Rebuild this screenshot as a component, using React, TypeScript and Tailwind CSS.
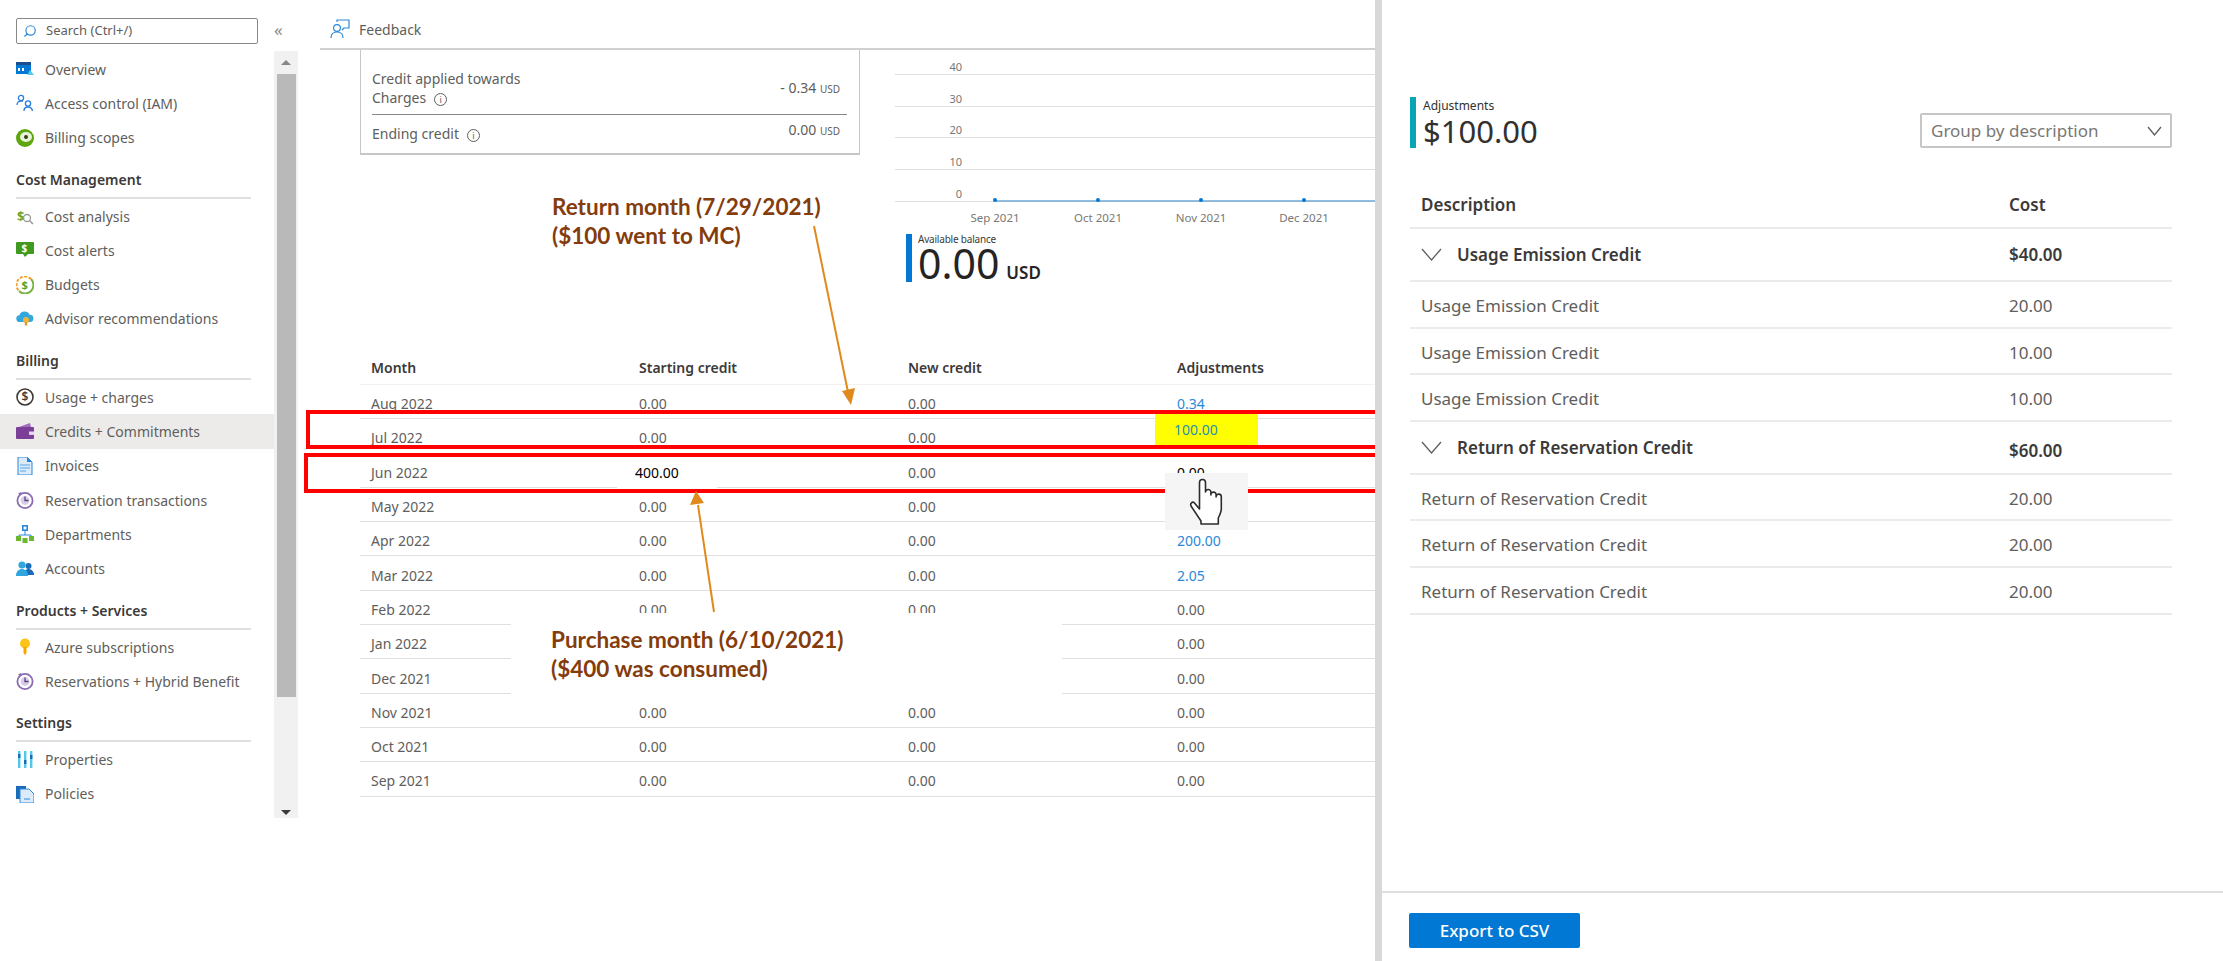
import React from "react";
import { Search } from "lucide-react";

// sidebar icons, all on an 18x18 box
const OverviewIcon = () => (
  <svg width="18" height="18" viewBox="0 0 18 18">
    <rect x="0" y="2" width="15" height="12" fill="#0078d4" />
    <rect x="0" y="2" width="15" height="3" fill="#1b4f8c" />
    <rect x="2" y="8" width="2" height="3" fill="#fff" />
    <rect x="6" y="8" width="2" height="3" fill="#fff" />
    <path d="M11 15 L14 10 L18 15 Z" fill="#50c8e8" />
  </svg>
);
const IamIcon = () => (
  <svg width="18" height="18" viewBox="0 0 18 18" fill="none" stroke="#2a7de1" strokeWidth="1.3">
    <circle cx="5" cy="4" r="2.6" />
    <path d="M1 11 c0-3 2-4 4-4 h2" />
    <circle cx="12" cy="9.5" r="2.6" />
    <path d="M8 17 c0-3 2-4 4-4 s4 1 4.5 4" />
  </svg>
);
const ScopesIcon = () => (
  <svg width="18" height="18" viewBox="0 0 18 18">
    <circle cx="9" cy="9" r="9" fill="#5ea60f" />
    <ellipse cx="10" cy="8" rx="6" ry="5" fill="#e8f3d8" />
    <circle cx="10" cy="8" r="2" fill="#30421a" />
  </svg>
);
const CostAnalysisIcon = () => (
  <svg width="18" height="18" viewBox="0 0 18 18" fill="none">
    <text x="1" y="14" fontSize="13" fontWeight="700" fill="#6aa52b" fontFamily="Noto Sans, sans-serif">$</text>
    <circle cx="11" cy="11" r="3.5" stroke="#9a9a9a" strokeWidth="1.3" />
    <path d="M13.5 13.5 L17 17" stroke="#9a9a9a" strokeWidth="1.5" />
  </svg>
);
const CostAlertsIcon = () => (
  <svg width="18" height="18" viewBox="0 0 18 18">
    <path d="M1 1 H17 a1 1 0 0 1 1 1 V12 a1 1 0 0 1 -1 1 H12 L9 16 L7 13 H1 a1 1 0 0 1 -1 -1 V2 a1 1 0 0 1 1 -1 Z" fill="#3f9a1d" />
    <text x="5.5" y="11" fontSize="10" fontWeight="700" fill="#fff" fontFamily="Noto Sans, sans-serif">$</text>
  </svg>
);
const BudgetsIcon = () => (
  <svg width="18" height="18" viewBox="0 0 18 18" fill="none">
    <path d="M3 15 a8 8 0 0 0 12 -12" stroke="#7bb342" strokeWidth="2" />
    <path d="M15 3 a8 8 0 0 0 -12 12" stroke="#f0a030" strokeWidth="2" strokeDasharray="3 1.5" />
    <text x="5.6" y="13" fontSize="11" fontWeight="700" fill="#57a31c" fontFamily="Noto Sans, sans-serif">$</text>
  </svg>
);
const AdvisorIcon = () => (
  <svg width="18" height="18" viewBox="0 0 18 18">
    <path d="M4 12 a3.4 3.4 0 0 1 -.6 -6.8 A5.5 5.5 0 0 1 13.6 4.8 A3.6 3.6 0 0 1 14 12 Z" fill="#32a8dc" />
    <circle cx="10" cy="10" r="3" fill="#f3b13d" />
    <rect x="8.8" y="12" width="2.4" height="3.5" fill="#d99a2b" />
  </svg>
);
const UsageIcon = () => (
  <svg width="18" height="18" viewBox="0 0 18 18" fill="none">
    <circle cx="9" cy="9" r="8" stroke="#3b3a39" strokeWidth="1.6" />
    <text x="5.4" y="13.4" fontSize="12" fontWeight="600" fill="#3b3a39" fontFamily="Noto Sans, sans-serif">$</text>
  </svg>
);
const WalletIcon = () => (
  <svg width="18" height="18" viewBox="0 0 18 18">
    <path d="M3 4 L14 0 L15 4 Z" fill="#a36cc0" />
    <rect x="0" y="4" width="18" height="12" rx="1" fill="#7b3f98" />
    <rect x="13" y="8.5" width="5" height="3.4" fill="#e6d6ee" />
  </svg>
);
const InvoiceIcon = () => (
  <svg width="18" height="18" viewBox="0 0 18 18">
    <path d="M2 0 H11 L16 5 V18 H2 Z" fill="#dcebfa" stroke="#2b88d8" strokeWidth="1" />
    <path d="M11 0 L16 5 H11 Z" fill="#2b88d8" />
    <path d="M4 8 H14 M4 11 H14 M4 14 H10" stroke="#5aa5e6" strokeWidth="1.2" />
  </svg>
);
const ReservationIcon = () => (
  <svg width="18" height="18" viewBox="0 0 18 18" fill="none">
    <circle cx="9" cy="9.5" r="7.6" stroke="#8a6bb1" strokeWidth="1.8" />
    <circle cx="9" cy="9.5" r="4.4" fill="#d8cde6" />
    <path d="M9 5.5 V9.5 H12.5" stroke="#5c3f80" strokeWidth="1.3" />
    <path d="M2 2.5 L5 1 L5 4.5 Z" fill="#8a6bb1" />
  </svg>
);
const DepartmentsIcon = () => (
  <svg width="18" height="18" viewBox="0 0 18 18">
    <rect x="6" y="0" width="6" height="6" fill="#2b88d8" />
    <rect x="7.6" y="1.6" width="2.8" height="2.8" fill="#fff" />
    <path d="M9 6 V10 M3 12 V10 H15 V12" stroke="#2b88d8" strokeWidth="1" fill="none" />
    <rect x="0" y="11" width="5" height="5" fill="#6bb72d" />
    <rect x="6.5" y="13" width="5" height="5" fill="#6bb72d" />
    <rect x="13" y="11" width="5" height="5" fill="#6bb72d" />
  </svg>
);
const AccountsIcon = () => (
  <svg width="18" height="18" viewBox="0 0 18 18">
    <circle cx="12.5" cy="6" r="3" fill="#1b6cb8" />
    <path d="M8 15 c0-4 2-6 4.5-6 S18 11 18 15 Z" fill="#1b6cb8" />
    <circle cx="6" cy="5" r="3.6" fill="#2fa6e0" />
    <path d="M0 16 c0-5 3-7 6-7 s6 2 6 7 Z" fill="#2fa6e0" />
  </svg>
);
const KeyIcon = () => (
  <svg width="18" height="18" viewBox="0 0 18 18">
    <circle cx="9" cy="5.500" r="5" fill="#fcc419" />
    <path d="M7.5 9 H10.5 V15 L9 17 L7.5 15 Z" fill="#f5a400" />
  </svg>
);
const PropertiesIcon = () => (
  <svg width="18" height="18" viewBox="0 0 18 18">
    <rect x="2" y="0" width="2.4" height="17" fill="#50c8e8" />
    <rect x="8" y="0" width="2.4" height="17" fill="#50c8e8" />
    <rect x="14" y="0" width="2.4" height="17" fill="#50c8e8" />
    <rect x="2" y="3" width="2.4" height="4" fill="#1b6cb8" />
    <rect x="8" y="9" width="2.4" height="4" fill="#1b6cb8" />
    <rect x="14" y="4" width="2.4" height="4" fill="#1b6cb8" />
  </svg>
);
const PoliciesIcon = () => (
  <svg width="18" height="18" viewBox="0 0 18 18">
    <path d="M0 1 H10 V14 H0 Z" fill="#1b6cb8" />
    <path d="M4 4 H13 L18 9 V17 a1 1 0 0 1 -1 1 H5 a1 1 0 0 1 -1 -1 Z" fill="#dcebfa" stroke="#2b88d8" />
    <path d="M8 14 H14" stroke="#2b88d8" />
  </svg>
);

// the wide thin V used by the panel's dropdown and group rows
const WideChevron = ({ w, h }: { w: number; h: number }) => (
  <svg width={w} height={h} viewBox={`0 0 ${w} ${h}`} fill="none" stroke="#605e5c" strokeWidth="1.3" className="shrink-0">
    <path d={`M1 1 L${w / 2} ${h - 1} L${w - 1} 1`} />
  </svg>
);

type NavItem = { label: string; icon: React.ReactNode; active?: boolean };
type NavGroup = { title?: string; items: NavItem[] };

const navGroups: NavGroup[] = [
  {
    items: [
      { label: "Overview", icon: <OverviewIcon /> },
      { label: "Access control (IAM)", icon: <IamIcon /> },
      { label: "Billing scopes", icon: <ScopesIcon /> },
    ],
  },
  {
    title: "Cost Management",
    items: [
      { label: "Cost analysis", icon: <CostAnalysisIcon /> },
      { label: "Cost alerts", icon: <CostAlertsIcon /> },
      { label: "Budgets", icon: <BudgetsIcon /> },
      { label: "Advisor recommendations", icon: <AdvisorIcon /> },
    ],
  },
  {
    title: "Billing",
    items: [
      { label: "Usage + charges", icon: <UsageIcon /> },
      { label: "Credits + Commitments", icon: <WalletIcon />, active: true },
      { label: "Invoices", icon: <InvoiceIcon /> },
      { label: "Reservation transactions", icon: <ReservationIcon /> },
      { label: "Departments", icon: <DepartmentsIcon /> },
      { label: "Accounts", icon: <AccountsIcon /> },
    ],
  },
  {
    title: "Products + Services",
    items: [
      { label: "Azure subscriptions", icon: <KeyIcon /> },
      { label: "Reservations + Hybrid Benefit", icon: <ReservationIcon /> },
    ],
  },
  {
    title: "Settings",
    items: [
      { label: "Properties", icon: <PropertiesIcon /> },
      { label: "Policies", icon: <PoliciesIcon /> },
    ],
  },
];

// Jan and Dec have no start/new values showing, the note is pasted over them
const creditRows = [
  { month: "Aug 2022", start: "0.00", fresh: "0.00", adj: "0.34", link: true },
  { month: "Jul 2022", start: "0.00", fresh: "0.00", adj: "", link: true },
  { month: "Jun 2022", start: "400.00", fresh: "0.00", adj: "0.00", link: false },
  { month: "May 2022", start: "0.00", fresh: "0.00", adj: "", link: false },
  { month: "Apr 2022", start: "0.00", fresh: "0.00", adj: "200.00", link: true },
  { month: "Mar 2022", start: "0.00", fresh: "0.00", adj: "2.05", link: true },
  { month: "Feb 2022", start: "0.00", fresh: "0.00", adj: "0.00", link: false },
  { month: "Jan 2022", start: "", fresh: "", adj: "0.00", link: false },
  { month: "Dec 2021", start: "", fresh: "", adj: "0.00", link: false },
  { month: "Nov 2021", start: "0.00", fresh: "0.00", adj: "0.00", link: false },
  { month: "Oct 2021", start: "0.00", fresh: "0.00", adj: "0.00", link: false },
  { month: "Sep 2021", start: "0.00", fresh: "0.00", adj: "0.00", link: false },
];

const adjustmentGroups = [
  { title: "Usage Emission Credit", total: "$40.00", totalClass: "", rows: ["20.00", "10.00", "10.00"] },
  { title: "Return of Reservation Credit", total: "$60.00", totalClass: "pt-[7px]", rows: ["20.00", "20.00", "20.00"] },
];

function InfoDot() {
  return (
    <span className="ml-2 inline-flex h-[13px] w-[13px] items-center justify-center rounded-full border border-[#605e5c] text-[9px] leading-none text-[#605e5c]">
      i
    </span>
  );
}

function Sidebar() {
  return (
    <aside className="flex w-[320px] shrink-0 flex-col">
      <div className="flex h-[51px] items-start pt-[18px]">
        <div className="ml-4 flex h-[26px] w-[242px] items-center gap-[9px] rounded-[2px] border border-[#8a8886] pl-[6px] text-[13px] text-[#605e5c]">
          <Search size={14} className="-scale-x-100 text-[#2b88d8]" />
          <span>Search (Ctrl+/)</span>
        </div>
        <span className="ml-[16px] mt-[1px] text-[17px] leading-[22px] text-[#8a8886]">«</span>
      </div>
      <div className="flex">
        <nav className="w-[274px] pt-[1px]">
          {navGroups.map((group, i) => (
            <div key={i}>
              {group.title && (
                <div className="ml-4 flex h-[44px] w-[235px] items-end border-b-2 border-[#e1dfdd] pb-[7px] text-[14px] font-semibold text-[#3b3a39]">
                  {group.title}
                </div>
              )}
              {group.items.map((item) => (
                <div
                  key={item.label}
                  className={`flex h-[34.3px] items-center pl-4 text-[14px] text-[#605e5c] ${item.active ? "bg-[#edebe9]" : ""}`}
                >
                  <span className="flex w-[29px] shrink-0">{item.icon}</span>
                  <span>{item.label}</span>
                </div>
              ))}
            </div>
          ))}
        </nav>
        <div className="flex h-[767px] w-[24px] flex-col items-center bg-[#f1f1f1]">
          <div className="flex h-[23px] items-center">
            <div className="h-0 w-0 border-x-[5px] border-b-[5px] border-x-transparent border-b-[#8a8886]" />
          </div>
          <div className="h-[623px] w-[19px] bg-[#b9b9b9]" />
          <div className="mt-auto mb-[3px] h-0 w-0 border-x-[5px] border-t-[5px] border-x-transparent border-t-[#3b3a39]" />
        </div>
      </div>
    </aside>
  );
}

function SummaryCard() {
  return (
    <div className="ml-[40px] h-[105px] w-[500px] shrink-0 border-x border-b-2 border-[#c8c6c4] pl-[11px] pr-[12px] text-[14px] text-[#605e5c]">
      <div className="flex h-[65px] items-end justify-between border-b border-[#8a8886] pb-[7px] pr-[7px]">
        <div className="leading-[19px]">
          <div>Credit applied towards</div>
          <div>
            Charges
            <InfoDot />
          </div>
        </div>
        <div className="mb-[8px] leading-[19px]">
          - 0.34 <span className="text-[10px]">USD</span>
        </div>
      </div>
      <div className="flex items-start justify-between pr-[7px] pt-[9px] leading-[19px]">
        <div>
          Ending credit
          <InfoDot />
        </div>
        <div className="-mt-[4px]">
          0.00 <span className="text-[10px]">USD</span>
        </div>
      </div>
    </div>
  );
}

function BalanceChart() {
  const ticks = ["40", "30", "20", "10", "0"];
  const months = ["Sep 2021", "Oct 2021", "Nov 2021", "Dec 2021"];
  return (
    <div className="ml-[35px] w-[480px] shrink-0">
      <div className="relative">
        {ticks.map((t) => (
          <div
            key={t}
            className="flex h-[31.8px] items-end justify-end border-b border-[#e1dfdd] pr-[413px] text-[11px] leading-[14px] text-[#797775] first:h-[24.8px]"
          >
            {t}
          </div>
        ))}
        {/* flat zero series */}
        <svg className="absolute bottom-0 left-0" width="480" height="6">
          <path d="M100 5 H480" stroke="#6ea9d6" strokeWidth="1.5" />
          <circle cx="100" cy="4" r="2" fill="#0078d4" />
          <circle cx="203" cy="4" r="2" fill="#0078d4" />
          <circle cx="306" cy="4" r="2" fill="#0078d4" />
          <circle cx="409" cy="4" r="2" fill="#0078d4" />
        </svg>
      </div>
      <div className="ml-[48.5px] mt-[9px] flex text-[11.5px] leading-[14px] text-[#797775]">
        {months.map((m) => (
          <div key={m} className="w-[103px] text-center">
            {m}
          </div>
        ))}
      </div>
      <div className="ml-[11px] mt-[9px] flex h-[48px] border-l-[6px] border-[#0078d4] pl-[6px] text-[#252423]">
        <div>
          <div className="h-[11px] text-[10px] leading-[11px] tracking-[-0.2px] text-[#3b3a39]">Available balance</div>
          <div className="flex h-[37px] items-baseline overflow-visible">
            <span className="text-[41px] leading-[37px]">0.00</span>
            <span className="ml-[7px] text-[17px] font-semibold">USD</span>
          </div>
        </div>
      </div>
    </div>
  );
}

function CreditTable() {
  return (
    <div className="ml-[40px] text-[14px] text-[#605e5c]">
      <div className="grid h-[35px] grid-cols-[268px_269px_269px_1fr] items-center border-b border-[#f3f2f1] pl-[11px] font-semibold text-[#3b3a39]">
        <div>Month</div>
        <div>Starting credit</div>
        <div>New credit</div>
        <div>Adjustments</div>
      </div>
      {creditRows.map((row) => (
        <div
          key={row.month}
          className="grid h-[34.3px] grid-cols-[268px_269px_269px_1fr] items-center border-b border-[#e1dfdd] pl-[11px] pt-[4px]"
        >
          <div>{row.month}</div>
          <div className={row.start === "400.00" ? "-ml-[4px] text-black" : ""}>{row.start}</div>
          <div>{row.fresh}</div>
          <div className={row.link ? "text-[#2b88d8]" : row.month === "Jun 2022" ? "text-black" : ""}>{row.adj}</div>
        </div>
      ))}
    </div>
  );
}

function AdjustmentsPanel() {
  return (
    <section className="flex w-[848px] shrink-0 flex-col border-l-[7px] border-[#d8d8d8] bg-white">
      <div className="flex-1 pl-[28px] pr-[51px] pt-[97px]">
        <div className="flex items-start justify-between">
          <div className="flex h-[51px] border-l-[6px] border-[#0aa5b5] pl-[7px] text-[#323130]">
            <div>
              <div className="text-[12px] leading-[17px]">Adjustments</div>
              <div className="text-[31px] leading-[34px]">$100.00</div>
            </div>
          </div>
          <div className="mt-[16px] flex h-[35px] w-[252px] items-center justify-between rounded-[2px] border-2 border-[#c8c6c4] pl-[9px] pr-[8px] text-[17px] text-[#797775]">
            <span>Group by description</span>
            <WideChevron w={15} h={10} />
          </div>
        </div>
        <div className="mt-[33px] text-[17px] text-[#605e5c]">
          <div className="grid h-[48px] grid-cols-[588px_1fr] items-center border-b-2 border-[#edebe9] pl-[11px] pt-[2px] font-semibold text-[#3b3a39]">
            <div>Description</div>
            <div>Cost</div>
          </div>
          {adjustmentGroups.map((group) => (
            <div key={group.title}>
              <div className="grid h-[53px] grid-cols-[588px_1fr] items-center border-b-2 border-[#edebe9] pl-[11px] font-semibold text-[#3b3a39]">
                <div className="flex items-center gap-[15px]">
                  <WideChevron w={21} h={13} />
                  <span>{group.title}</span>
                </div>
                <div className={group.totalClass}>{group.total}</div>
              </div>
              {group.rows.map((cost, i) => (
                <div
                  key={i}
                  className="grid h-[46.6px] grid-cols-[588px_1fr] items-center border-b-2 border-[#edebe9] pl-[11px] pt-[3px]"
                >
                  <div>{group.title}</div>
                  <div>{cost}</div>
                </div>
              ))}
            </div>
          ))}
        </div>
      </div>
      <div className="h-[70px] border-t-2 border-[#e1dfdd] pl-[27px] pt-[20px]">
        <button className="h-[35px] w-[171px] rounded-[2px] bg-[#0078d4] text-[17px] font-medium text-white">
          Export to CSV
        </button>
      </div>
    </section>
  );
}

function Annotations() {
  const note = "absolute font-['Lato'] text-[22.5px] font-bold leading-[29px] text-[#843c0c]";
  return (
    <>
      {/* white paste-over behind the second note */}
      <div className="absolute left-[511px] top-[613px] h-[81px] w-[551px] bg-white" />
      <div className="absolute left-[617px] top-[486px] h-[4px] w-[100px] bg-white" />

      <div className="absolute left-[1155px] top-[413px] flex h-[32px] w-[103px] items-center bg-[#ffff00] pl-[19px] text-[14px] text-[#1f8fb5]">
        100.00
      </div>

      <div className="absolute left-[306px] top-[410px] h-[39px] w-[1069px] border-[4px] border-r-0 border-[#ff0000]" />
      <div className="absolute left-[304px] top-[453px] h-[40px] w-[1071px] border-[4px] border-r-0 border-[#ff0000]" />

      <div className="absolute left-[1165px] top-[473px] flex h-[57px] w-[83px] items-center justify-center bg-[#f5f5f5]">
        <svg width="36" height="48" viewBox="0 0 36 48" fill="#fff" stroke="#2b2b2b" strokeWidth="1.6" strokeLinejoin="round">
          <path d="M10.5 27 V4.5 a3 3 0 0 1 6 0 V14 a2.7 2.7 0 0 1 5.4 .5 V17 a2.6 2.6 0 0 1 5.2 -.5 V19 a2.6 2.6 0 0 1 5.2 -.5 V31 c0 3 -1.5 6 -3 9 V46 H12 V43 L2 28 c-1.2 -2.5 1.5 -5 3.5 -3 L10.5 31 Z" />
        </svg>
      </div>

      <svg className="absolute left-0 top-0" width="2223" height="961" fill="none">
        <path d="M814 226 L848 392" stroke="#e08a1e" strokeWidth="2" />
        <path d="M842 391 L855 388 L851 405 Z" fill="#e08a1e" />
        <path d="M714 612 L698 505" stroke="#e08a1e" strokeWidth="2" />
        <path d="M690 505 L704 503 L696 491 Z" fill="#e08a1e" />
      </svg>

      <div className={`${note} left-[552px] top-[192px]`}>
        Return month (7/29/2021)
        <br />
        ($100 went to MC)
      </div>
      <div className={`${note} left-[551px] top-[625px]`}>
        Purchase month (6/10/2021)
        <br />
        ($400 was consumed)
      </div>
    </>
  );
}

export default function App() {
  return (
    <div className="relative flex h-[961px] w-[2223px] overflow-hidden bg-white font-['Noto_Sans',sans-serif]">
      <Sidebar />
      <main className="w-[1055px] shrink-0 overflow-hidden">
        <header className="flex h-[50px] items-center gap-[9px] border-b-2 border-[#d2d0ce] pl-[10px] pt-[10px] text-[14px] text-[#605e5c]">
          <svg width="20" height="20" viewBox="0 0 20 20" fill="none" stroke="#2b88d8" strokeWidth="1.2">
            <path d="M7 3 V1 H19 V9 H14 L12 11" />
            <circle cx="7" cy="9" r="3.4" />
            <path d="M1 19 c0-4 2.500-6 6-6 s6 2 6 6" />
          </svg>
          <span>Feedback</span>
        </header>
        <div className="flex h-[300px] items-start">
          <SummaryCard />
          <BalanceChart />
        </div>
        <CreditTable />
      </main>
      <AdjustmentsPanel />
      <Annotations />
    </div>
  );
}
